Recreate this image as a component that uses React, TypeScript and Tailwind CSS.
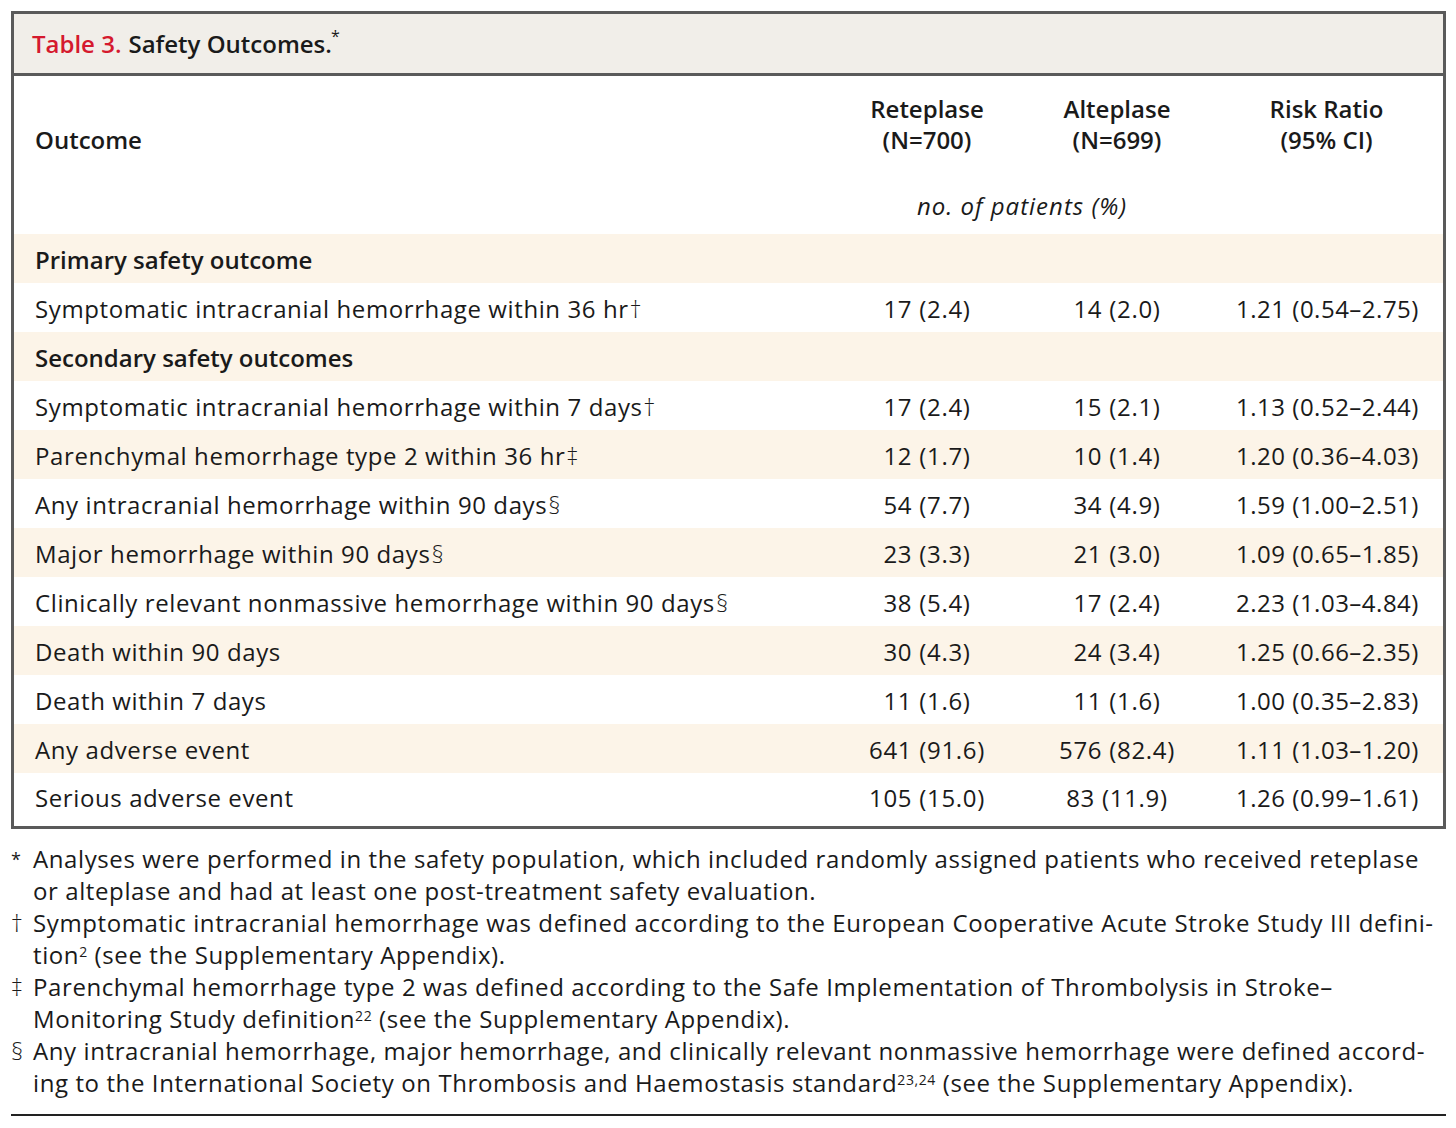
import React from 'react'

interface Row {
  label: string
  mark?: string
  ret?: string
  alt?: string
  rr?: string
  heading?: boolean
}

const ROWS: Row[] = [
  { label: 'Primary safety outcome', heading: true },
  { label: 'Symptomatic intracranial hemorrhage within 36 hr', mark: '†', ret: '17 (2.4)', alt: '14 (2.0)', rr: '1.21 (0.54–2.75)' },
  { label: 'Secondary safety outcomes', heading: true },
  { label: 'Symptomatic intracranial hemorrhage within 7 days', mark: '†', ret: '17 (2.4)', alt: '15 (2.1)', rr: '1.13 (0.52–2.44)' },
  { label: 'Parenchymal hemorrhage type 2 within 36 hr', mark: '‡', ret: '12 (1.7)', alt: '10 (1.4)', rr: '1.20 (0.36–4.03)' },
  { label: 'Any intracranial hemorrhage within 90 days', mark: '§', ret: '54 (7.7)', alt: '34 (4.9)', rr: '1.59 (1.00–2.51)' },
  { label: 'Major hemorrhage within 90 days', mark: '§', ret: '23 (3.3)', alt: '21 (3.0)', rr: '1.09 (0.65–1.85)' },
  { label: 'Clinically relevant nonmassive hemorrhage within 90 days', mark: '§', ret: '38 (5.4)', alt: '17 (2.4)', rr: '2.23 (1.03–4.84)' },
  { label: 'Death within 90 days', ret: '30 (4.3)', alt: '24 (3.4)', rr: '1.25 (0.66–2.35)' },
  { label: 'Death within 7 days', ret: '11 (1.6)', alt: '11 (1.6)', rr: '1.00 (0.35–2.83)' },
  { label: 'Any adverse event', ret: '641 (91.6)', alt: '576 (82.4)', rr: '1.11 (1.03–1.20)' },
  { label: 'Serious adverse event', ret: '105 (15.0)', alt: '83 (11.9)', rr: '1.26 (0.99–1.61)' },
]

const GRID = 'grid grid-cols-[818px_190px_190px_1fr]'

export default function App() {
  return (
    <div className="w-[1456px] h-[1128px] bg-white pt-[11px] pl-[11px] text-[#1a1a1a] font-['Open_Sans',sans-serif]">
      {/* table box */}
      <div className="w-[1435px] border-[3px] border-[#5a5a5a]">
        <div className="h-[62px] bg-[#f1eee9] border-b-[3px] border-[#5a5a5a] flex items-center pl-[18px] text-[24px] font-semibold">
          <span className="text-[#d5192e]">Table 3.</span>
          <span className="ml-[7px]">Safety Outcomes.</span>
          <sup className="text-[16px] font-normal -ml-[1px]">*</sup>
        </div>

        {/* column headings */}
        <div className={`${GRID} h-[158px] text-[24px] font-semibold leading-[31px]`}>
          <div className="pl-[21px] pt-[48px]">Outcome</div>
          <div className="text-center pt-[17px]">Reteplase<br />(N=700)</div>
          <div className="text-center pt-[17px]">Alteplase<br />(N=699)</div>
          <div className="text-center pt-[17px] pr-[2px]">Risk Ratio<br />(95% CI)</div>
          <div />
          <div className="col-span-2 text-center italic font-normal pt-[22px] tracking-[1px]">no. of patients (%)</div>
        </div>

        {ROWS.map((r, i) => (
          <div
            key={r.label}
            className={`${GRID} items-center text-[24px] ${i === ROWS.length - 1 ? 'h-[53px] pb-[4px]' : 'h-[49px] pt-[2px]'} ${i % 2 === 0 ? 'bg-[#fcf4e8]' : 'bg-white'}`}
          >
            <div className={`pl-[21px] whitespace-nowrap ${r.heading ? 'font-semibold' : 'tracking-[0.6px]'}`}>
              {r.label}
              {r.mark && <span className="ml-[1px] font-light">{r.mark}</span>}
            </div>
            <div className="text-center tracking-[0.7px]">{r.ret}</div>
            <div className="text-center tracking-[0.7px]">{r.alt}</div>
            <div className="text-center tracking-[0.5px]">{r.rr}</div>
          </div>
        ))}
      </div>

      {/* footnotes */}
      <div className="w-[1435px] mt-[14px] text-[24px] leading-[32px] whitespace-nowrap tracking-[0.6px]">
        <div className="flex">
          <span className="w-[22px] shrink-0 text-[18px]">*</span>
          <div>
            Analyses were performed in the safety population, which included randomly assigned patients who received reteplase<br />
            or alteplase and had at least one post-treatment safety evaluation.
          </div>
        </div>
        <div className="flex">
          <span className="w-[22px] shrink-0 font-light">†</span>
          <div>
            Symptomatic intracranial hemorrhage was defined according to the European Cooperative Acute Stroke Study III defini-<br />
            tion<sup className="text-[14px]">2</sup> (see the Supplementary Appendix).
          </div>
        </div>
        <div className="flex">
          <span className="w-[22px] shrink-0 font-light">‡</span>
          <div>
            Parenchymal hemorrhage type 2 was defined according to the Safe Implementation of Thrombolysis in Stroke–<br />
            Monitoring Study definition<sup className="text-[14px]">22</sup> (see the Supplementary Appendix).
          </div>
        </div>
        <div className="flex">
          <span className="w-[22px] shrink-0 font-light">§</span>
          <div>
            Any intracranial hemorrhage, major hemorrhage, and clinically relevant nonmassive hemorrhage were defined accord-<br />
            ing to the International Society on Thrombosis and Haemostasis standard<sup className="text-[14px]">23,24</sup> (see the Supplementary Appendix).
          </div>
        </div>
        <div className="mt-[15px] h-[2px] bg-[#222]" />
      </div>
    </div>
  )
}
